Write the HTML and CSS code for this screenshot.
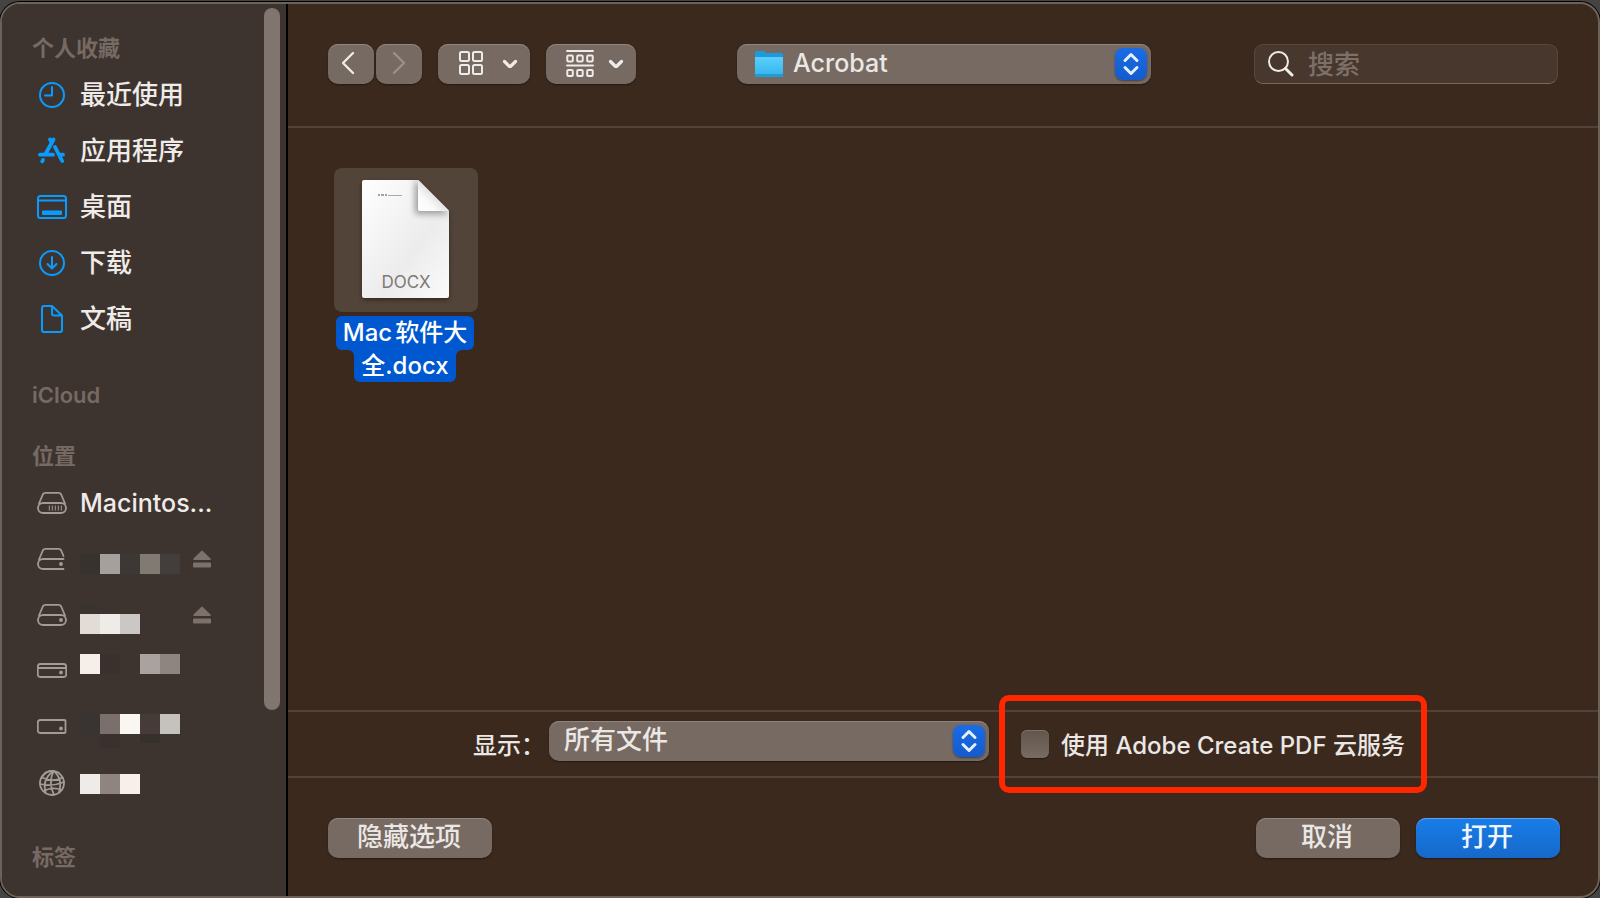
FILE: index.html
```html
<!DOCTYPE html>
<html lang="zh-CN">
<head>
<meta charset="utf-8">
<title>打开</title>
<link rel="stylesheet" href="styles.css">
</head>
<body>
<div class="window">
  <aside class="sidebar">
    <nav class="places">
      <h2 class="heading">个人收藏</h2>
      <a class="place" href="#recents">
        <svg class="icon blue" viewBox="0 0 30 30"><circle cx="15" cy="15" r="12"/><path d="M15 7v8.500H8"/></svg>
        <span>最近使用</span>
      </a>
      <a class="place" href="#applications">
        <svg class="icon blue thick" viewBox="0 0 30 30"><path d="M16.500 3.500L8.500 18M13 3.500l1.500 2.500M6 24l-.8 1.400M3 18.700h13M18 11l7.200 14M22 18.700h4"/></svg>
        <span>应用程序</span>
      </a>
      <a class="place" href="#desktop">
        <svg class="icon blue" viewBox="0 0 30 30"><rect x="1" y="4" width="28" height="22" rx="2.500"/><path d="M1 8.500h28"/><rect class="solid" x="5" y="18.500" width="20" height="4.500" rx="1"/></svg>
        <span>桌面</span>
      </a>
      <a class="place" href="#downloads">
        <svg class="icon blue" viewBox="0 0 30 30"><circle cx="15" cy="15" r="12"/><path d="M15 9v11M10.500 16l4.500 4.500 4.500-4.500"/></svg>
        <span>下载</span>
      </a>
      <a class="place" href="#documents">
        <svg class="icon blue" viewBox="0 0 30 30"><path d="M7 2h8l10 9.500V26a2 2 0 0 1-2 2H7a2 2 0 0 1-2-2V4a2 2 0 0 1 2-2zM15 2v7.500a2 2 0 0 0 2 2h8"/></svg>
        <span>文稿</span>
      </a>

      <h2 class="heading heading-cloud">iCloud</h2>

      <h2 class="heading heading-locations">位置</h2>
      <a class="place" href="#macintosh">
        <svg class="icon gray" viewBox="0 0 30 30"><path d="M2 15.500L5.800 6.500Q6.600 4.800 8.500 4.800h13q1.900 0 2.700 1.700L28 15.500"/><rect x="1" y="15" width="28" height="10" rx="5"/><path class="thin" d="M12.300 18v4.200M15.300 18v4.200M18.300 18v4.200M21.300 18v4.200M24.300 18v4.200"/></svg>
        <span class="latin">Macintos...</span>
      </a>
      <a class="place" href="#volume-1" aria-label="磁盘 1">
        <svg class="icon gray" viewBox="0 0 30 30"><path d="M2 15.500L5.800 6.500Q6.600 4.800 8.500 4.800h13q1.900 0 2.700 1.700L26.500 12"/><path d="M26.500 15H6a5 5 0 0 0 0 10h20.500"/><circle class="solid" cx="24" cy="20" r="1"/></svg>
        <svg class="mosaic" viewBox="0 0 100 56"><path fill="#38322f" d="M0 23h20v20H0z"/><path fill="#a6a09d" d="M20 23h20v20H20z"/><path fill="#3d3835" d="M40 23h20v20H40z"/><path fill="#817a73" d="M60 23h20v20H60z"/><path fill="#433e3b" d="M80 23h20v20H80z"/></svg>
        <svg class="eject" viewBox="0 0 20 20"><path d="M10 1.200L18.500 9.500q.8 1.500-.8 1.500H2.300Q.7 11 1.500 9.500z"/><rect x="1" y="13.500" width="18" height="5" rx="1"/></svg>
      </a>
      <a class="place" href="#volume-2" aria-label="磁盘 2">
        <svg class="icon gray" viewBox="0 0 30 30"><path d="M2 15.500L5.800 6.500Q6.600 4.800 8.500 4.800h13q1.900 0 2.700 1.700L28 15.500"/><rect x="1" y="15" width="28" height="10" rx="5"/><circle class="solid" cx="24" cy="20" r="1"/></svg>
        <svg class="mosaic" viewBox="0 0 100 56"><path fill="#3a3431" d="M0 17h20v10H0z"/><path fill="#e2dbd6" d="M0 27h20v20H0z"/><path fill="#efebe7" d="M20 27h20v20H20z"/><path fill="#cbc7c4" d="M40 27h20v20H40z"/></svg>
        <svg class="eject" viewBox="0 0 20 20"><path d="M10 1.200L18.500 9.500q.8 1.500-.8 1.500H2.300Q.7 11 1.500 9.500z"/><rect x="1" y="13.500" width="18" height="5" rx="1"/></svg>
      </a>
      <a class="place" href="#volume-3" aria-label="磁盘 3">
        <svg class="icon gray" viewBox="0 0 30 30"><rect x="0.800" y="8" width="28.400" height="13" rx="2.500"/><path d="M1 12h28"/><circle class="solid" cx="24" cy="16.500" r="1"/></svg>
        <svg class="mosaic" viewBox="0 0 100 56"><path fill="#f6eee9" d="M0 11h20v20H0z"/><path fill="#3a302d" d="M20 11h20v20H20z"/><path fill="#aaa29f" d="M60 11h20v20H60z"/><path fill="#8e8480" d="M80 11h20v20H80z"/></svg>
      </a>
      <a class="place" href="#volume-4" aria-label="磁盘 4">
        <svg class="icon gray" viewBox="0 0 30 30"><path d="M28.500 8.500q-.5-.5-1.500-.5H3.300Q.8 8 .8 10.500v8Q.8 21 3.300 21H27q1 0 1.500-.5V8.500"/><circle class="solid" cx="24" cy="16.500" r="1"/></svg>
        <svg class="mosaic" viewBox="0 0 100 56"><path fill="#393431" d="M0 15h20v20H0z"/><path fill="#7a6f6b" d="M20 15h20v20H20z"/><path fill="#faf6f2" d="M40 15h20v20H40z"/><path fill="#463b38" d="M60 15h20v20H60z"/><path fill="#c5c1bd" d="M80 15h20v20H80z"/><path fill="#3a302d" d="M20 35h20v14H20z"/><path fill="#35302b" d="M60 35h20v9H60z"/></svg>
      </a>
      <a class="place" href="#network" aria-label="网络">
        <svg class="icon gray" viewBox="0 0 30 30"><circle cx="15" cy="15" r="12"/><path d="M16.500 3Q11 15 17 27M16.500 3Q5 11 8.500 24.500M16.500 3Q26 10 22 24.500M5 9.500Q16 15 25.500 9.500M3 16Q15 19 27 14M6.500 23Q16 18.500 24.500 22M13 3Q7 5 4.500 10"/></svg>
        <svg class="mosaic" viewBox="0 0 100 56"><path fill="#efebe9" d="M0 19h20v20H0z"/><path fill="#8e8480" d="M20 19h20v20H20z"/><path fill="#f7efea" d="M40 19h20v20H40z"/></svg>
      </a>

      <h2 class="heading heading-tags">标签</h2>
    </nav>
    <div class="scrollbar"><div class="thumb"></div></div>
  </aside>

  <main class="panel">
    <header class="toolbar">
      <div class="tools">
        <div class="history">
          <button class="button nav-button" type="button" aria-label="后退"><svg width="16" height="24" viewBox="0 0 16 24"><path d="M11 2L1 12l10 10"/></svg></button>
          <button class="button nav-button" type="button" aria-label="前进" disabled><svg width="16" height="24" viewBox="0 0 16 24"><path d="M4 2l10 10L4 22"/></svg></button>
        </div>
        <button class="button view-button" type="button" aria-label="图标视图">
          <svg width="28" height="28" viewBox="0 0 28 28"><rect x="3" y="3" width="9" height="9" rx="1.500"/><rect x="16" y="3" width="9" height="9" rx="1.500"/><rect x="3" y="16" width="9" height="9" rx="1.500"/><rect x="16" y="16" width="9" height="9" rx="1.500"/></svg>
          <svg class="chevron" width="16" height="10" viewBox="0 0 16 10"><path d="M2.500 3.500L8 9l5.500-5.500"/></svg>
        </button>
        <button class="button view-button group-button" type="button" aria-label="群组">
          <svg width="28" height="28" viewBox="0 0 28 28"><path d="M1 2h26M1 16.500h26"/><rect x="1.300" y="6.500" width="5.500" height="6" rx="1"/><rect x="11.200" y="6.500" width="5.500" height="6" rx="1"/><rect x="21.200" y="6.500" width="5.500" height="6" rx="1"/><rect x="1.300" y="21" width="5.500" height="6" rx="1"/><rect x="11.200" y="21" width="5.500" height="6" rx="1"/><rect x="21.200" y="21" width="5.500" height="6" rx="1"/></svg>
          <svg class="chevron" width="16" height="10" viewBox="0 0 16 10"><path d="M2.500 3.500L8 9l5.500-5.500"/></svg>
        </button>
      </div>
      <div class="popup popup-folder">
        <select class="select" aria-label="文件夹"><option>Acrobat</option></select>
        <svg class="folder" width="30" height="28" viewBox="0 0 30 28">
          <defs><linearGradient id="folder-front" x2="0" y2="1"><stop offset="0" stop-color="#5ccfff"/><stop offset="1" stop-color="#32b3ea"/></linearGradient></defs>
          <path fill="#1b9bdb" d="M1 3q0-2 2-2h6q1 0 1.800.8L12 3h15q2 0 2 2v20H1z"/>
          <path fill="url(#folder-front)" d="M1 7h28v18.500q0 1.500-1.500 1.500h-25Q1 27 1 25.500z"/>
          <path fill="#209cd4" d="M1 24h28v1.500q0 1.500-1.500 1.500h-25Q1 27 1 25.500z"/>
        </svg>
        <svg class="stepper" viewBox="0 0 32 32"><path d="M10 12.500L16 6.500l6 6M10 19.500l6 6 6-6"/></svg>
      </div>
      <label class="search">
        <svg width="26" height="26" viewBox="0 0 26 26"><circle cx="10.500" cy="10.500" r="9.500"/><path class="handle" d="M17.500 17.500l6.500 6.500"/></svg>
        <input class="search-input" type="search" placeholder="搜索" aria-label="搜索">
      </label>
    </header>

    <section class="files">
      <button class="file" type="button">
        <span class="thumbnail">
          <svg width="96" height="128" viewBox="0 0 96 128">
            <defs>
              <linearGradient id="paper" x2="1" y2="1"><stop offset="0" stop-color="#fff"/><stop offset=".6" stop-color="#ececec"/><stop offset="1" stop-color="#fbfbfb"/></linearGradient>
              <linearGradient id="fold" x1="0" y1="1" x2="1" y2="0"><stop offset="0" stop-color="#fff"/><stop offset=".3" stop-color="#fafafa"/><stop offset=".6" stop-color="#d8d8d8"/></linearGradient>
              <filter id="soft" x="-50%" y="-50%" width="200%" height="200%"><feGaussianBlur stdDeviation="3"/></filter>
              <clipPath id="sheet"><path d="M4 6q0-2 2-2h53q1.500 0 2.500 1L90 33.500q1 1 1 2.500v84q0 2-2 2H6q-2 0-2-2z"/></clipPath>
            </defs>
            <path class="sheet" fill="url(#paper)" d="M4 6q0-2 2-2h53q1.500 0 2.500 1L90 33.500q1 1 1 2.500v84q0 2-2 2H6q-2 0-2-2z"/>
            <g clip-path="url(#sheet)"><path fill="#777" opacity=".7" filter="url(#soft)" d="M57 3v35h34z"/></g>
            <path fill="url(#fold)" d="M60 4L91 35H62q-2 0-2-2z"/>
            <path stroke="#888" stroke-width="1.500" stroke-dasharray="2 1 3 1" stroke-linecap="butt" d="M20 19h10"/>
            <path stroke="#aaa" stroke-linecap="butt" d="M30 19.500h14"/>
            <text class="kind" x="48" y="112" text-anchor="middle">DOCX</text>
          </svg>
        </span>
        <span class="file-name"><span class="name-line"><span class="name-latin">Mac</span>软件大</span><span class="name-line name-line-last">全.docx</span></span>
      </button>
    </section>

    <section class="filter">
      <label class="filter-label" for="file-type">显示：</label>
      <div class="popup popup-type">
        <select class="select" id="file-type"><option>所有文件</option></select>
        <svg class="stepper" viewBox="0 0 32 32"><path d="M10 12.500L16 6.500l6 6M10 19.500l6 6 6-6"/></svg>
      </div>
      <label class="cloud-option"><input class="checkbox" type="checkbox"><span class="cloud-text">使用 Adobe Create PDF 云服务</span></label>
    </section>

    <footer class="actions">
      <button class="button options-button" type="button">隐藏选项</button>
      <button class="button action-button" type="button">取消</button>
      <button class="button action-button primary" type="button">打开</button>
    </footer>
  </main>
</div>
</body>
</html>
```
FILE: styles.css
```css
* {
  box-sizing: border-box;
}

body {
  margin: 0;
  padding-top: 2px;
  min-height: 100vh;
  display: flex;
  background: #454442;
  color: #ebe7e4;
  font: 500 26px/32px Inter, "Noto Sans CJK SC", sans-serif;
}

button,
input,
select {
  font: inherit;
  color: inherit;
}

svg {
  flex: none;
  display: block;
  fill: none;
  stroke-linecap: round;
  stroke-linejoin: round;
}

.window {
  flex: 1;
  display: flex;
  overflow: hidden;
  border: 2px solid #6d625a;
  border-radius: 20px;
  background: #3b291d;
  box-shadow: 0 0 0 1px #000;
}

/* Sidebar */

.sidebar {
  flex: none;
  width: 286px;
  display: flex;
  border-right: 2px solid #000;
  background: #3d342f;
}

.places {
  flex: 1;
  padding: 23px 0 18px 30px;
}

.heading {
  margin: 0;
  height: 40px;
  font-size: 22px;
  font-weight: 600;
  line-height: 42px;
  color: #766a63;
}

.heading-cloud {
  margin-top: 27px;
}

.heading-locations {
  margin-top: 21px;
}

.heading-tags {
  margin-top: 25px;
}

.place {
  display: flex;
  align-items: center;
  gap: 13px;
  height: 56px;
  padding-left: 5px;
  color: #efebe8;
  text-decoration: none;
  white-space: nowrap;
}

.latin {
  font-size: 25px;
}

.icon {
  width: 30px;
  height: 30px;
  stroke-width: 2;
}

.icon .solid {
  fill: currentColor;
}

.icon .thin {
  stroke-width: 1;
}

.blue {
  color: #0a9bff;
  stroke: #0a9bff;
}

.blue .solid {
  stroke: none;
}

.gray {
  color: #a29b97;
  stroke: #a29b97;
  stroke-width: 1.8;
}

.thick {
  stroke-width: 3.8;
}

.mosaic {
  width: 100px;
  height: 56px;
}

.eject {
  width: 20px;
  height: 20px;
  margin-left: -1px;
  fill: #7c716b;
}

.scrollbar {
  width: 22px;
  padding: 4px 6px 0 0;
}

.thumb {
  width: 16px;
  height: 79%;
  border-radius: 8px;
  background: #80766f;
}

/* Shared controls */

.button {
  display: flex;
  align-items: center;
  justify-content: center;
  height: 40px;
  padding: 0 2px 2px 0;
  border: 0;
  border-radius: 10px;
  background: #766a62;
  box-shadow: inset 0 1px #91867f, 0 1px 2px #0006;
}

.popup {
  position: relative;
  flex: 0 1 auto;
  height: 40px;
}

.select {
  appearance: none;
  width: 100%;
  height: 40px;
  padding: 0 44px 2px 15px;
  border: 0;
  border-radius: 10px;
  background: #766a62;
  box-shadow: inset 0 1px #91867f, 0 1px 2px #0006;
}

.stepper {
  position: absolute;
  top: 4px;
  right: 4px;
  width: 32px;
  height: 32px;
  border-radius: 8px;
  background: linear-gradient(#1a6ce6, #145bcd);
  box-shadow: 0 1px 2px #0006;
  stroke: #e6efff;
  stroke-width: 3;
  pointer-events: none;
}

/* Main panel */

.panel {
  flex: 1;
  min-width: 0;
  display: flex;
  flex-direction: column;
}

.toolbar {
  display: flex;
  align-items: center;
  justify-content: space-between;
  gap: 16px;
  padding: 40px 40px 42px;
  border-bottom: 2px solid #51433a;
}

.tools {
  display: flex;
  gap: 16px;
}

.tools svg {
  stroke: #eeebe8;
  stroke-width: 2;
}

.history {
  display: flex;
  gap: 2px;
}

.nav-button {
  width: 46px;
}

.nav-button svg {
  stroke-width: 2.4;
}

.nav-button:disabled svg {
  stroke: #9b918b;
}

.view-button {
  gap: 17px;
  width: 92px;
  padding-left: 9px;
}

.group-button {
  gap: 14px;
  width: 90px;
}

.tools .chevron {
  stroke-width: 3.2;
}

.popup-folder {
  width: 414px;
  margin-right: 2px;
  font-size: 25px;
}

.popup-folder .select {
  padding-left: 56px;
}

.folder {
  position: absolute;
  top: 6px;
  left: 17px;
  pointer-events: none;
}

.search {
  flex: 0 1 304px;
  min-width: 0;
  display: flex;
  align-items: center;
  gap: 14px;
  height: 40px;
  padding-left: 13px;
  border: 1px solid #56483f;
  border-bottom-color: #76695f;
  border-radius: 9px;
  background: #48372c;
}

.search svg {
  stroke: #eeebe8;
  stroke-width: 2;
}

.search .handle {
  stroke-width: 3;
}

.search-input {
  flex: 1;
  min-width: 0;
  padding: 2px 0 0;
  border: 0;
  outline: 0;
  background: none;
}

.search-input::placeholder {
  color: #7c7068;
}

.files {
  flex: 1;
  padding: 40px 46px;
}

.file {
  display: flex;
  flex-direction: column;
  align-items: center;
  gap: 4px;
  width: 144px;
  padding: 0;
  border: 0;
  background: none;
  font-size: 24px;
  color: #fff;
}

.thumbnail {
  display: flex;
  align-items: center;
  justify-content: center;
  width: 144px;
  height: 144px;
  border-radius: 8px;
  background: #534439;
}

.sheet {
  filter: drop-shadow(0 2px 2px #0006);
}

.kind {
  fill: #7d7a77;
  font-size: 17px;
  font-weight: 400;
}

.file-name {
  display: flex;
  flex-direction: column;
  align-items: center;
  padding-right: 2px;
  white-space: nowrap;
}

.name-line {
  padding: 1px 7px;
  border-radius: 6px;
  background: #0058d0;
}

.name-latin {
  margin-right: 3px;
}

.name-line-last {
  position: relative;
  padding: 0 7px;
  border-radius: 0 0 6px 6px;
}

.name-line-last::before,
.name-line-last::after {
  content: "";
  position: absolute;
  top: 0;
  width: 6px;
  height: 6px;
}

.name-line-last::before {
  right: 100%;
  background: radial-gradient(circle at 0 100%, #0000 6px, #0058d0 6px);
}

.name-line-last::after {
  left: 100%;
  background: radial-gradient(circle at 100% 100%, #0000 6px, #0058d0 6px);
}

.filter {
  display: flex;
  align-items: center;
  height: 68px;
  padding-left: 185px;
  border-top: 2px solid #51433a;
  border-bottom: 2px solid #51433a;
  font-size: 24px;
  white-space: nowrap;
}

.filter-label {
  flex: none;
  width: 76px;
  padding-top: 3px;
}

.popup-type {
  flex: 0 1 440px;
  margin-bottom: 6px;
  font-size: 26px;
}

.cloud-option {
  position: relative;
  display: flex;
  align-items: center;
  gap: 12px;
  margin-left: 32px;
}

.cloud-text {
  padding-top: 3px;
}

/* Red call-out drawn round the option, over the divider lines */
.cloud-option::after {
  content: "";
  position: absolute;
  inset: -32px -22px -31px -22px;
  border: 6px solid #ff2600;
  border-radius: 10px;
  pointer-events: none;
}

.checkbox {
  appearance: none;
  width: 28px;
  height: 28px;
  margin: 0;
  border-radius: 6px;
  background: linear-gradient(#62554c, #776b63);
  box-shadow: inset 0 1px #7d7169, 0 1px 1px #0006;
}

.actions {
  display: flex;
  gap: 16px;
  padding: 40px 38px 38px 40px;
}

.options-button {
  width: 164px;
  margin-right: auto;
}

.action-button {
  width: 144px;
}

.primary {
  background: linear-gradient(#187de8, #1669ca);
  box-shadow: inset 0 1px #5ba3f0, 0 1px 2px #0006;
  color: #f0f5ff;
}
```
